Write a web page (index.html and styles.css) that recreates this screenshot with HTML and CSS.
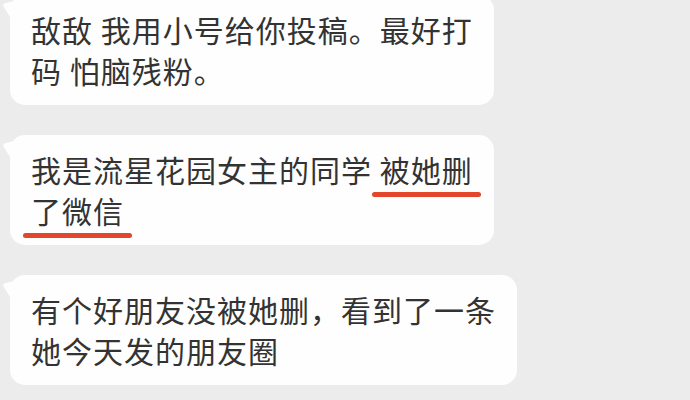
FILE: index.html
```html
<!DOCTYPE html>
<html lang="zh-CN">
<head>
  <meta charset="UTF-8">
  <meta name="viewport" content="width=device-width, initial-scale=1.0">
  <title>聊天记录</title>
  <link rel="stylesheet" href="styles.css">
</head>
<body>
  <div class="chat">
    <div class="bubble first">
      <svg class="tail" viewBox="0 0 12 24" width="12" height="24"><path d="M12 0 L4 2 Q0 3 1.5 5.5 Q6 13 12 22 Z" fill="#fefefe"/></svg>
      敌敌 我用小号给你投稿。最好打<br>码 怕脑残粉。
    </div>

    <div class="bubble">
      <svg class="tail" viewBox="0 0 12 24" width="12" height="24"><path d="M12 0 L4 2 Q0 3 1.5 5.5 Q6 13 12 22 Z" fill="#fefefe"/></svg>
      我是流星花园女主的同学 <span class="mark">被她删</span><br><span class="mark">了微信</span>
    </div>

    <div class="bubble">
      <svg class="tail" viewBox="0 0 12 24" width="12" height="24"><path d="M12 0 L4 2 Q0 3 1.5 5.5 Q6 13 12 22 Z" fill="#fefefe"/></svg>
      有个好朋友没被她删，看到了一条<br>她今天发的朋友圈
    </div>
  </div>
</body>
</html>
```

FILE: styles.css
```css
body {
  margin: 0;
  background-color: #ececec;
  font-family: "Noto Sans CJK SC", "Noto Sans", sans-serif;
  overflow: hidden;
}
.chat {
  display: flex;
  flex-direction: column;
  align-items: flex-start;
  gap: 30px;
  padding-left: 10px;
}
.bubble {
  position: relative;
  background-color: #fefefe;
  color: #333;
  font-size: 30px;
  line-height: 41px;
  letter-spacing: 1px;
  padding: 14px 21px 14px 21px;
  border-radius: 15px;
  white-space: nowrap;
}
.bubble.first {
  margin-top: -5px;
}
.tail {
  position: absolute;
  left: -8px;
  top: 6px;
}
.mark {
  position: relative;
}
.mark::after {
  content: '';
  position: absolute;
  left: -8px;
  right: -8px;
  bottom: -6px;
  height: 5px;
  border-radius: 3px;
  background-color: #e2462b;
}
```
